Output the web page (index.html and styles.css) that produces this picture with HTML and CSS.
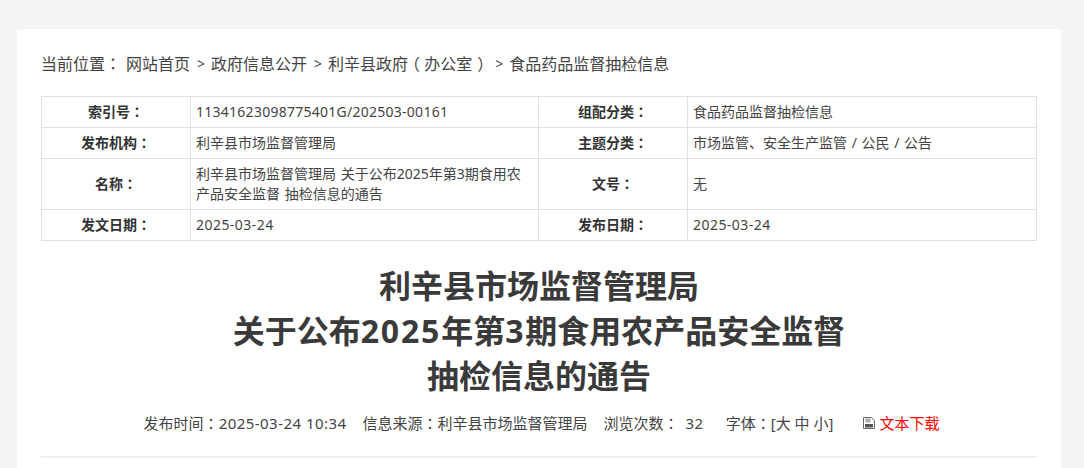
FILE: index.html
```html
<!DOCTYPE html>
<html lang="zh-CN">
<head>
<meta charset="utf-8">
<title>食品药品监督抽检信息</title>
<link rel="stylesheet" href="styles.css">
</head>
<body>
<main class="card">
  <nav class="crumbs">
    <span class="here">当前位置<span class="p">：</span></span>
    <a>网站首页</a><span class="sep">&gt;</span>
    <a>政府信息公开</a><span class="sep">&gt;</span>
    <a>利辛县政府<span class="open">（</span>办公室<span class="close">）</span></a><span class="sep">&gt;</span>
    <a>食品药品监督抽检信息</a>
  </nav>
  <table class="meta">
    <colgroup><col class="c1"><col class="c2"><col class="c3"><col class="c4"></colgroup>
    <tr><th>索引号<span class="p">：</span></th><td><span class="id">11341623098775401G/202503-00161</span></td><th>组配分类<span class="p">：</span></th><td>食品药品监督抽检信息</td></tr>
    <tr><th>发布机构<span class="p">：</span></th><td>利辛县市场监督管理局</td><th>主题分类<span class="p">：</span></th><td>市场监管、安全生产监管 / 公民 / 公告</td></tr>
    <tr class="tall"><th>名称<span class="p">：</span></th><td class="name">利辛县市场监督管理局 关于公布2025年第3期食用农产品安全监督 抽检信息的通告</td><th>文号<span class="p">：</span></th><td>无</td></tr>
    <tr><th>发文日期<span class="p">：</span></th><td><span class="num">2025-03-24</span></td><th>发布日期<span class="p">：</span></th><td><span class="num">2025-03-24</span></td></tr>
  </table>
  <h1 class="title">利辛县市场监督管理局<br>关于公布<span class="big">2025</span>年第<span class="big">3</span>期食用农产品安全监督<br>抽检信息的通告</h1>
  <div class="info">
    <span>发布时间<span class="p">：</span><span class="num">2025-03-24 10:34</span></span>
    <span>信息来源<span class="p">：</span>利辛县市场监督管理局</span>
    <span>浏览次数<span class="p">：</span> <span class="count">32</span></span>
    <span class="size">字体<span class="p">：</span>[大 中 小]</span>
    <a class="download"><svg class="icon" viewBox="0 0 12 12" width="12" height="12"><path d="M0.5 0.5H8.5L11.5 3.5V11.5H0.5Z" fill="#fff" stroke="#666"/><rect x="2.5" y="1.5" width="5" height="4" fill="#aaa"/><rect x="2" y="7" width="8" height="3.5" fill="#555"/></svg><span>文本下载</span></a>
  </div>
  <hr class="rule">
</main>
</body>
</html>
```
FILE: styles.css
```css
html, body { margin: 0; padding: 0; height: 468px; overflow: hidden; }
body {
  background: #f4f4f4;
  font-family: "Noto Sans", "Noto Sans CJK SC", sans-serif;
  color: #333;
  padding: 29px 23px 0 17px;
}
.card {
  background: #fff;
  padding: 24px 24px 0;
  height: 500px;
  box-sizing: border-box;
}
.p {
  font-family: "Noto Sans CJK TC", sans-serif;
  font-feature-settings: "locl" 0;
  line-height: 0;
}
.open { margin: 0 4px 0 -4px; }
.close { margin: 0 -5px 0 5px; }
.crumbs {
  display: flex;
  align-items: center;
  height: 22px;
  font-size: 16px;
  line-height: 22px;
  color: #444;
  margin-bottom: 21px;
  white-space: nowrap;
}
.here { margin-right: 5px; }
.sep { margin: 0 6px 0 7px; font-size: 14px; }
.meta {
  width: 995px;
  table-layout: fixed;
  border-collapse: collapse;
  font-size: 14px;
  color: #444;
}
.c1, .c3 { width: 149px; }
.c2 { width: 348px; }
.c4 { width: 349px; }
.meta th, .meta td {
  border: 1px solid #e0e0e0;
  height: 31px;
  padding: 0 5px;
  line-height: 20px;
  box-sizing: border-box;
  word-spacing: 1px;
}
.meta .tall th, .meta .tall td { height: 51px; }
.meta th { text-align: center; font-weight: 700; color: #333; }
.meta td { text-align: left; }
.meta .name { padding-right: 14px; }
.id { letter-spacing: 0.26px; }
.num { letter-spacing: 0.46px; }
.count { margin-left: 3px; letter-spacing: 0.5px; }
.title {
  margin: 22px 0 0;
  text-align: center;
  font-size: 32px;
  line-height: 45px;
  font-weight: 700;
  color: #3a3a3a;
}
.big { letter-spacing: 1.8px; }
.info {
  display: flex;
  justify-content: center;
  gap: 16px;
  margin-top: 13px;
  padding-left: 5px;
  font-size: 15px;
  line-height: 24px;
  color: #444;
}
.size { margin-left: 6px; }
.download {
  display: flex;
  align-items: center;
  gap: 4px;
  margin-left: 14px;
  color: #f00;
}
.icon { flex: none; }
.rule {
  border: 0;
  height: 2px;
  background: #f0f0f0;
  margin: 21px 0 0;
}
```
